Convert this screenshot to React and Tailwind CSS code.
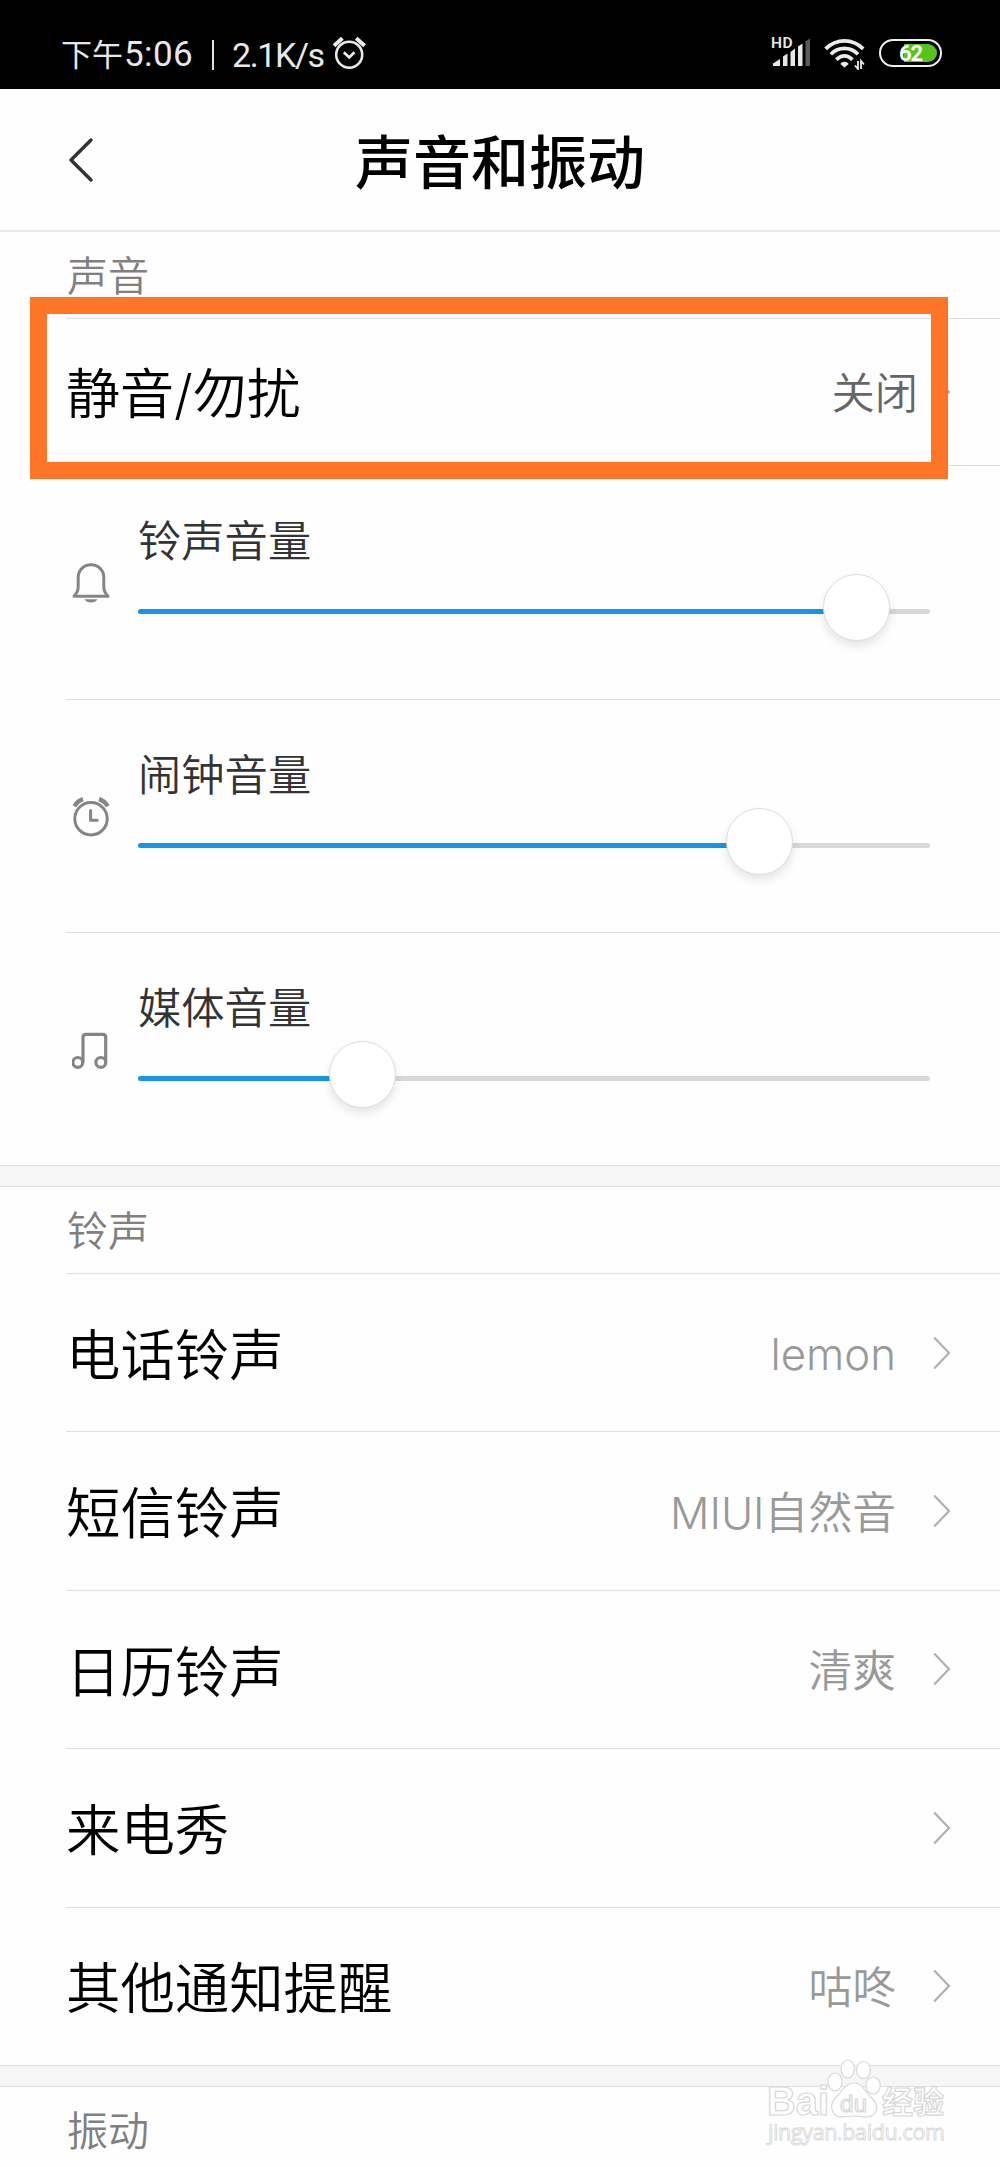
const volumes = [
    { name: '铃声音量', icon: BellIcon, value: 90.65 },
    { name: '闹钟音量', icon: AlarmIcon, value: 78.35 },
    { name: '媒体音量', icon: MusicIcon, value: 28.33 },
]

const ringtones = [
    { name: '电话铃声', value: 'lemon' },
    { name: '短信铃声', value: 'MIUI自然音' },
    { name: '日历铃声', value: '清爽' },
    { name: '来电秀', value: '' },
    { name: '其他通知提醒', value: '咕咚' },
]

function BellIcon() {
    return (
        <svg className="w-[38px] h-[40px]" viewBox="0 0 38 40" fill="none" stroke="#858585" strokeWidth="3" strokeLinejoin="round">
            <path d="M2 33.3H36C33.2 30.5 31.8 27.5 31.8 23.5V14.5C31.8 7.2 26.2 1.8 19 1.8S6.2 7.2 6.2 14.5V23.5C6.2 27.5 4.8 30.5 2 33.3Z" />
            <path d="M12.5 36.3H25.5C24 38.6 22 39.6 19 39.6S14 38.6 12.5 36.3Z" fill="#858585" stroke="none" />
        </svg>
    )
}

function AlarmIcon() {
    return (
        <svg className="w-[38px] h-[40px]" viewBox="0 0 38 40" fill="none" stroke="#858585" strokeWidth="3">
            <circle cx="19" cy="21.7" r="16.2" />
            <path d="M18.6 13.5V23.2H25.2" strokeLinecap="round" strokeLinejoin="round" />
            <path d="M2.6 9.2C4.6 5.6 7.2 3.3 11 2.2M27 2.2C30.8 3.3 33.6 5.6 35.6 9.2" strokeWidth="4.4" />
        </svg>
    )
}

function MusicIcon() {
    return (
        <svg className="w-[38px] h-[40px]" viewBox="0 0 38 40" fill="none" stroke="#858585" strokeWidth="3.2">
            <circle cx="5.8" cy="32.4" r="4.9" />
            <circle cx="28.8" cy="32.4" r="4.9" />
            <path d="M11 32.4V7.3Q11 4.3 14 4.3H30.7Q33.7 4.3 33.7 7.3V32.4" />
        </svg>
    )
}

function Chevron() {
    return (
        <svg className="w-[18px] h-[34px]" viewBox="0 0 18 34" fill="none" stroke="#b0b0b0" strokeWidth="2.2">
            <path d="M1.2 1.5L16 17L1.2 32.5" />
        </svg>
    )
}

function StatusBar() {
    return (
        <div className="h-[89px] bg-black text-[#e8e8e8] flex items-start justify-between pl-[61px] pr-[58px] pt-[36px]">
            <div className="flex items-center h-[34px] leading-[34px] text-[35px] whitespace-nowrap font-normal font-[Roboto,'Noto_Sans_CJK_SC',sans-serif]">
                <span className="text-[31px] pt-[5px]">下午</span>
                <span className="ml-px w-[70px] pt-[4px] tracking-[0.4px]">5:06</span>
                <span className="ml-[18px] mt-[3px] w-[2px] h-[30px] bg-[#e0e0e0]"></span>
                <span className="ml-[18px] w-[94px] pt-[4px] text-[34px] tracking-[-1.4px]">2.1K/s</span>
                <svg className="ml-[7px] w-[33px] h-[34px]" viewBox="0 0 33 34" fill="none" stroke="#ebebeb" strokeWidth="2.5">
                    <circle cx="16.2" cy="18.7" r="13" />
                    <path d="M10.8 16.2L16.2 21.4L21.5 16.2" strokeWidth="2.8" />
                    <path d="M1 9.8L9.4 2.2M23.2 2.2L31.6 9.8" strokeWidth="4" />
                </svg>
            </div>
            <div className="flex items-start">
                <svg className="w-[40px] h-[36px] -mt-[4px]" viewBox="0 -4 40 36" fill="#e8e8e8">
                    <text x="0" y="12.3" fontFamily="Roboto, sans-serif" fontSize="15.5" fontWeight="600" textLength="21.5">HD</text>
                    <path d="M2 30V27.5L9 23V30ZM12 30V20.5L16.5 17.5V30ZM19.5 30V16L24 12.5V30ZM27 30V10.5L31.5 7.5V30Z" />
                    <path d="M34.5 30V5.5L39 2.5V30Z" fill="#5a5a5a" />
                </svg>
                <svg className="ml-[13px] w-[42px] h-[34px]" viewBox="0 0 42 34" fill="none" stroke="#ebebeb" strokeWidth="3.7">
                    <path d="M1.6 12.9C12.5 2.2 28.5 2.2 39.2 12.9" />
                    <path d="M6.8 18.2C14.8 10.4 26 10.4 34 18.2" />
                    <path d="M12.3 23.7C17.6 18.7 23.2 18.7 28.5 23.7" />
                    <path d="M20.5 31.5L16.3 27.9C18.5 25 22.5 25 24.7 27.9Z" fill="#ebebeb" stroke="none" />
                    <path d="M34 25V33L31 29.5M37 33V25L40 28.5" strokeWidth="1.8" />
                </svg>
                <div className="ml-[13px] mt-[3px] w-[63px] h-[28px] rounded-full border-[2.5px] border-[#eee] p-[3px] relative flex justify-end">
                    <div className="w-[33px] h-full bg-[#56c41c] rounded-r-full"></div>
                    <span className="absolute inset-0 text-center leading-[25px] text-[22px] font-bold text-white tracking-[-1px] font-[Roboto,sans-serif]">62</span>
                </div>
            </div>
        </div>
    )
}

function SectionTitle({ children }) {
    return <div className="h-[86px] pl-[67px] leading-[88px] text-[41px] text-[#808080]">{children}</div>
}

function VolumeRow({ name, icon: Icon, value }) {
    return (
        <div className="ml-[66px] h-[233px] border-t border-[#dcdcdc] first:border-t-0 flex">
            <div className="w-[72px] pl-[6px] pt-[97px]">
                <Icon />
            </div>
            <div className="w-[792px] pt-[50px]">
                <div className="text-[43.3px] leading-[50px] text-[#333]">{name}</div>
                <div className="mt-[43px] h-[5px] rounded-full bg-[#d8d8d8] relative">
                    <div className="h-full rounded-full bg-[#1696e8]" style={{ width: `${value}%` }}></div>
                    <div
                        className="absolute -top-[35px] w-[67px] h-[67px] -ml-[33px] rounded-full bg-white border border-[#dedede] shadow-[0_5px_10px_rgba(0,0,0,0.1)]"
                        style={{ left: `${value}%` }}
                    ></div>
                </div>
            </div>
        </div>
    )
}

function RingtoneRow({ name, value }) {
    return (
        <div className="ml-[66px] h-[158.4px] border-t border-[#dedede] flex items-center pr-[49px]">
            <span className="text-[54.4px] text-black pt-[6px]">{name}</span>
            <span className="ml-auto text-[43.8px] text-[#999] mr-[37px] pt-[5px]">{value}</span>
            <Chevron />
        </div>
    )
}

function Watermark() {
    return (
        <svg className="absolute left-[760px] top-[2054px] w-[192px] h-[96px]" viewBox="0 0 192 96" fill="#fefefe" stroke="#d8d8d8" strokeWidth="1.2">
            <text x="7" y="61" fontFamily="'Liberation Sans', sans-serif" fontWeight="700" fontSize="40" textLength="62" lengthAdjust="spacingAndGlyphs">Bai</text>
            <text x="122" y="59" fontFamily="'Noto Sans CJK SC', sans-serif" fontWeight="700" fontSize="31" textLength="62">经验</text>
            <ellipse cx="75" cy="28" rx="7" ry="9" />
            <ellipse cx="87.7" cy="15" rx="6.7" ry="9" />
            <ellipse cx="103.5" cy="16" rx="7" ry="8.5" />
            <ellipse cx="113" cy="31.5" rx="7.2" ry="8.5" />
            <path d="M94 29C87 29 84 34 79 40C74 45 69 50 73 58C77 66 87 62 94 62S112 66 116 57C119 49 112 45 108 40C103 34 101 29 94 29Z" />
            <text x="80" y="58" fontFamily="'Liberation Sans', sans-serif" fontWeight="400" fontSize="24" textLength="27">du</text>
            <text x="8" y="86" fontFamily="'Open Sans', sans-serif" fontWeight="400" fontSize="21.5" textLength="177" strokeWidth="0.9">jingyan.baidu.com</text>
        </svg>
    )
}

export default function App() {
    return (
        <div className="relative w-[1000px] h-[2167px] overflow-hidden bg-[#fefefe] font-[350] font-[Inter,'Noto_Sans_CJK_SC',sans-serif]">
            <StatusBar />

            {/* Header */}
            <div className="h-[143px] border-b-2 border-[#e8e8e8] grid grid-cols-3 items-center">
                <svg className="ml-[68px] mt-px w-[26px] h-[46px]" viewBox="0 0 26 46" fill="none" stroke="#333" strokeWidth="3.5" strokeLinecap="round" strokeLinejoin="round">
                    <path d="M23 3L3 23L23 43" />
                </svg>
                <h1 className="pt-[8px] text-center text-[58px] font-medium text-black whitespace-nowrap">声音和振动</h1>
            </div>

            {/* Sound */}
            <SectionTitle>声音</SectionTitle>
            <div className="ml-[66px] h-[148px] border-y border-[#dcdcdc] flex items-center pr-[49px]">
                <span className="text-[54px] text-black pt-[4px]">静音/勿扰</span>
                <span className="ml-auto text-[43.3px] text-[#666] mr-[15px] pt-[3px]">关闭</span>
                <Chevron />
            </div>
            <div>
                {volumes.map((v) => (
                    <VolumeRow key={v.name} {...v} />
                ))}
            </div>

            {/* Ringtones */}
            <div className="h-[22px] bg-[#f6f6f6] border-y border-[#e0e0e0]"></div>
            <SectionTitle>铃声</SectionTitle>
            <div>
                {ringtones.map((r) => (
                    <RingtoneRow key={r.name} {...r} />
                ))}
            </div>

            {/* Vibration */}
            <div className="h-[22px] bg-[#f6f6f6] border-y border-[#e0e0e0]"></div>
            <SectionTitle>振动</SectionTitle>

            {/* Highlight frame over the mute row */}
            <div className="absolute left-[30px] top-[297px] w-[918px] h-[182px] border-[17.5px] border-[#ff7527]"></div>
            <Watermark />
        </div>
    )
}
